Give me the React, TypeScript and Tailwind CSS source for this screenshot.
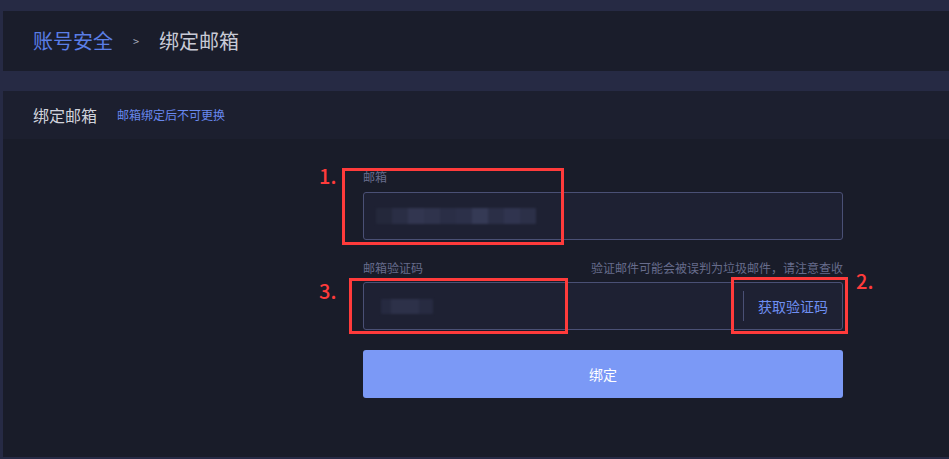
import React from 'react';

const emailBlur = ['#24283b', '#2a2e45', '#323650', '#2f334c', '#2a2e46', '#2c3049', '#353a55', '#2b2f47', '#30344f', '#2c3048'];

export default function App() {
  return (
    <div
      className="relative w-full h-[459px] overflow-hidden bg-[#262a44] pt-[11px] pl-[3px]"
      style={{ fontFamily: '"Noto Sans CJK SC", "Noto Sans", sans-serif' }}
    >
      {/* Breadcrumb */}
      <div className="h-[60px] bg-[#1a1d2b] flex items-center pl-[30px]">
        <span className="text-[20px] text-[#5a7ee6]">账号安全</span>
        <span className="text-[11px] text-[#a8abbb] ml-[20px]">&gt;</span>
        <span className="text-[20px] text-[#c8cad6] ml-[20px]">绑定邮箱</span>
      </div>

      {/* Card */}
      <div className="mt-[20px]">
        <div className="h-[48px] bg-[#1c1f2f] flex items-center pl-[30px]">
          <span className="text-[16px] text-[#d0d2dc]">绑定邮箱</span>
          <span className="text-[12px] text-[#6888ee] ml-[20px]">邮箱绑定后不可更换</span>
        </div>
        <div className="h-[318px] bg-[#191c29] pt-[28px]">
          <div className="ml-[360px] w-[480px]">
            <div className="h-[20px] flex items-center text-[12px] text-[#676c8c]">邮箱</div>
            <div className="mt-[5px] h-[48px] rounded-[3px] border border-[#4a5075] bg-[#1e2133] flex items-center pl-[12px]">
              <div className="flex h-[16px] blur-[1px]">
                {emailBlur.map((c, i) => (
                  <div key={i} className="w-[16px] h-full" style={{ background: c }} />
                ))}
              </div>
            </div>

            <div className="mt-[18px] h-[20px] flex items-center justify-between text-[12px] text-[#676c8c]">
              <span>邮箱验证码</span>
              <span>验证邮件可能会被误判为垃圾邮件，请注意查收</span>
            </div>
            <div className="mt-[4px] h-[48px] rounded-[3px] border border-[#4a5075] bg-[#1e2133] flex items-center">
              <div className="flex-1 pl-[17px]">
                <div className="flex h-[15px] blur-[1px]">
                  <div className="w-[10px] h-full bg-[#262a40]" />
                  <div className="w-[28px] h-full bg-[#2d3149]" />
                  <div className="w-[14px] h-full bg-[#272b41]" />
                </div>
              </div>
              <div className="w-px h-[30px] bg-[#4a5075]" />
              <button className="px-[14px] text-[14px] text-[#6e8ff2]">获取验证码</button>
            </div>

            <button className="mt-[20px] w-full h-[48px] rounded-[3px] bg-[#7b99f6] text-[14px] text-white">
              绑定
            </button>
          </div>
        </div>
      </div>

      {/* Annotations */}
      <div className="absolute left-[342px] top-[168px] w-[222px] h-[77px] border-[3px] border-[#ff3b3b]" />
      <span className="absolute left-[319px] top-[161px] text-[20px] font-medium text-[#ff3b3b]">1.</span>
      <div className="absolute left-[731px] top-[277px] w-[117px] h-[57px] border-[3px] border-[#ff3b3b]" />
      <span className="absolute left-[856px] top-[266px] text-[20px] font-medium text-[#ff3b3b]">2.</span>
      <div className="absolute left-[349px] top-[278px] w-[219px] h-[56px] border-[3px] border-[#ff3b3b]" />
      <span className="absolute left-[319px] top-[276px] text-[20px] font-medium text-[#ff3b3b]">3.</span>
    </div>
  );
}
